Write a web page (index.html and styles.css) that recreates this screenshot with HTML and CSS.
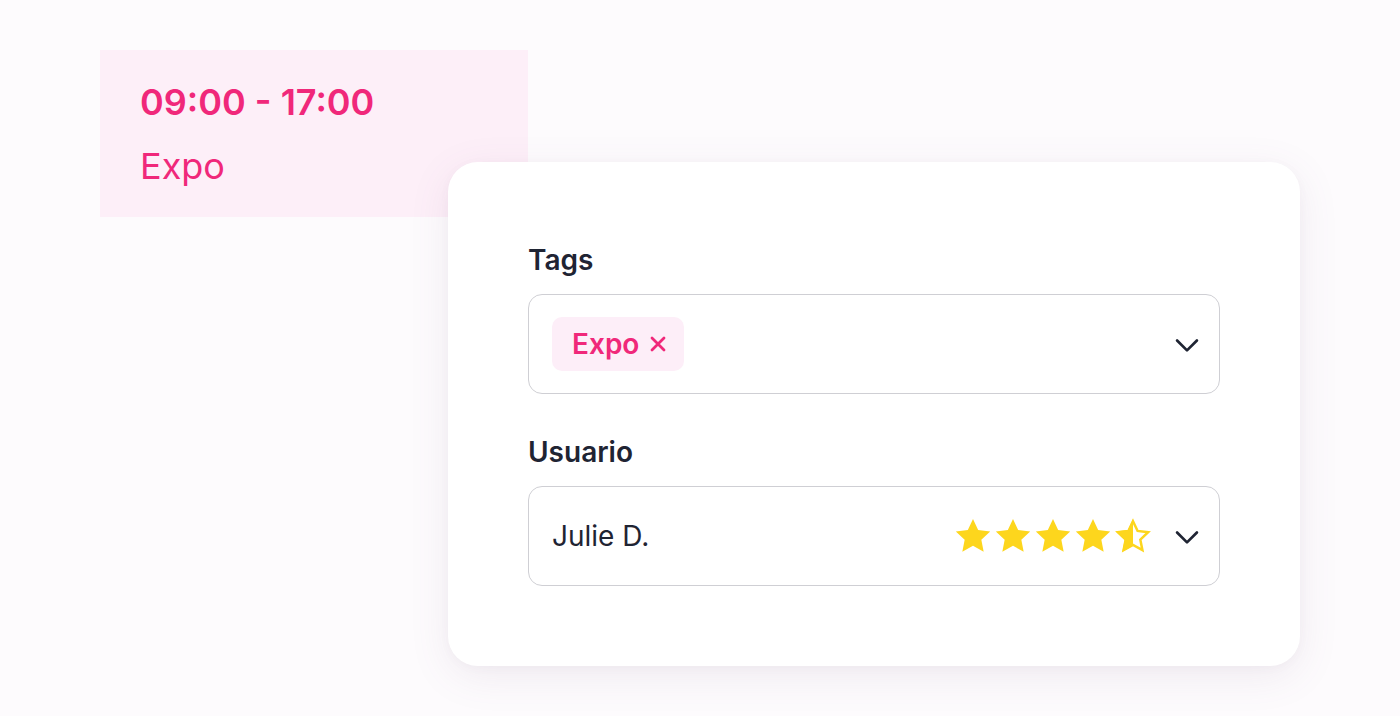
FILE: index.html
```html
<!DOCTYPE html>
<html lang="es">
<head>
<meta charset="utf-8">
<link rel="stylesheet" href="styles.css">
</head>
<body>
<div class="stage">
  <div class="event">
    <div class="event-time">09:00 - 17:00</div>
    <div class="event-title">Expo</div>
  </div>
  <div class="card">
    <div class="field">
      <div class="label">Tags</div>
      <div class="select">
        <div class="chip">Expo <svg class="chip-x" viewBox="0 0 16 16" width="16" height="16"><path d="M2 2l12 12M14 2L2 14" stroke="#f0287a" stroke-width="2.8" stroke-linecap="round"/></svg></div>
        <svg class="chev" viewBox="0 0 24 24" width="28" height="28"><path d="M3.5 9L12 17.5 20.5 9" fill="none" stroke="#1f2433" stroke-width="2.3" stroke-linecap="round" stroke-linejoin="round"/></svg>
      </div>
    </div>
    <div class="field">
      <div class="label">Usuario</div>
      <div class="select">
        <div class="user">Julie D.</div>
        <div class="stars">
          <svg viewBox="0 0 24 24" width="40" height="40"><path class="star" d="M12 1.8l3.1 6.6 7.2.9-5.3 5 1.4 7.1L12 17.9l-6.4 3.5 1.4-7.1-5.3-5 7.2-.9z"/></svg>
          <svg viewBox="0 0 24 24" width="40" height="40"><path class="star" d="M12 1.8l3.1 6.6 7.2.9-5.3 5 1.4 7.1L12 17.9l-6.4 3.5 1.4-7.1-5.3-5 7.2-.9z"/></svg>
          <svg viewBox="0 0 24 24" width="40" height="40"><path class="star" d="M12 1.8l3.1 6.6 7.2.9-5.3 5 1.4 7.1L12 17.9l-6.4 3.5 1.4-7.1-5.3-5 7.2-.9z"/></svg>
          <svg viewBox="0 0 24 24" width="40" height="40"><path class="star" d="M12 1.8l3.1 6.6 7.2.9-5.3 5 1.4 7.1L12 17.9l-6.4 3.5 1.4-7.1-5.3-5 7.2-.9z"/></svg>
          <svg viewBox="0 0 24 24" width="40" height="40"><path d="M12 3.1l2.75 5.85 6.35.8-4.7 4.45 1.25 6.3L12 17.4l-5.65 3.1 1.25-6.3-4.7-4.45 6.35-.8z" fill="none" stroke="#fdd61d" stroke-width="1.5" stroke-linejoin="miter"/><path class="star" d="M12 1.8V17.9l-6.4 3.5 1.4-7.1-5.3-5 7.2-.9z"/></svg>
        </div>
        <svg class="chev" viewBox="0 0 24 24" width="28" height="28"><path d="M3.5 9L12 17.5 20.5 9" fill="none" stroke="#1f2433" stroke-width="2.3" stroke-linecap="round" stroke-linejoin="round"/></svg>
      </div>
    </div>
  </div>
</div>
</body>
</html>
```
FILE: styles.css
```css
* { box-sizing: border-box; }
html, body {
  margin: 0;
  padding: 0;
  background: #fdfbfd;
  font-family: Inter, "Noto Sans", "Liberation Sans", sans-serif;
}
.stage {
  position: relative;
  width: 1400px;
  height: 716px;
  padding: 50px 0 0 100px;
}
.event {
  width: 428px;
  height: 167px;
  background: #fdeff8;
  padding: 30px 40px 0;
  color: #f0287a;
}
.event-time {
  font-size: 36px;
  font-weight: 600;
  line-height: 44px;
}
.event-title {
  font-size: 36px;
  font-weight: 400;
  line-height: 44px;
  margin-top: 20px;
}
.card {
  position: absolute;
  left: 448px;
  top: 162px;
  width: 852px;
  height: 504px;
  background: #fff;
  border-radius: 30px;
  box-shadow: 0 10px 40px rgba(120, 90, 130, 0.10), 0 2px 10px rgba(120, 90, 130, 0.04);
  padding: 80px 80px 0;
  display: flex;
  flex-direction: column;
  gap: 40px;
}
.label {
  font-size: 28px;
  font-weight: 600;
  line-height: 36px;
  color: #1f2433;
  margin-bottom: 16px;
}
.select {
  height: 100px;
  border: 1px solid #cfcfd4;
  border-radius: 14px;
  display: flex;
  align-items: center;
  padding: 0 18px 0 23px;
}
.chip {
  height: 54px;
  background: #fdeef8;
  border-radius: 10px;
  padding: 0 18px 0 20px;
  display: flex;
  align-items: center;
  font-size: 28px;
  font-weight: 600;
  color: #f0287a;
}
.chip-x {
  display: block;
  margin-left: 11px;
}
.chev {
  margin-left: auto;
  display: block;
}
.user {
  font-size: 28px;
  font-weight: 400;
  color: #1f2433;
}
.stars {
  margin-left: auto;
  display: flex;
  gap: 0;
  margin-right: 20px;
}
.stars svg { display: block; }
.star { fill: #fdd61d; }
.stars + .chev { margin-left: 0; }
```
